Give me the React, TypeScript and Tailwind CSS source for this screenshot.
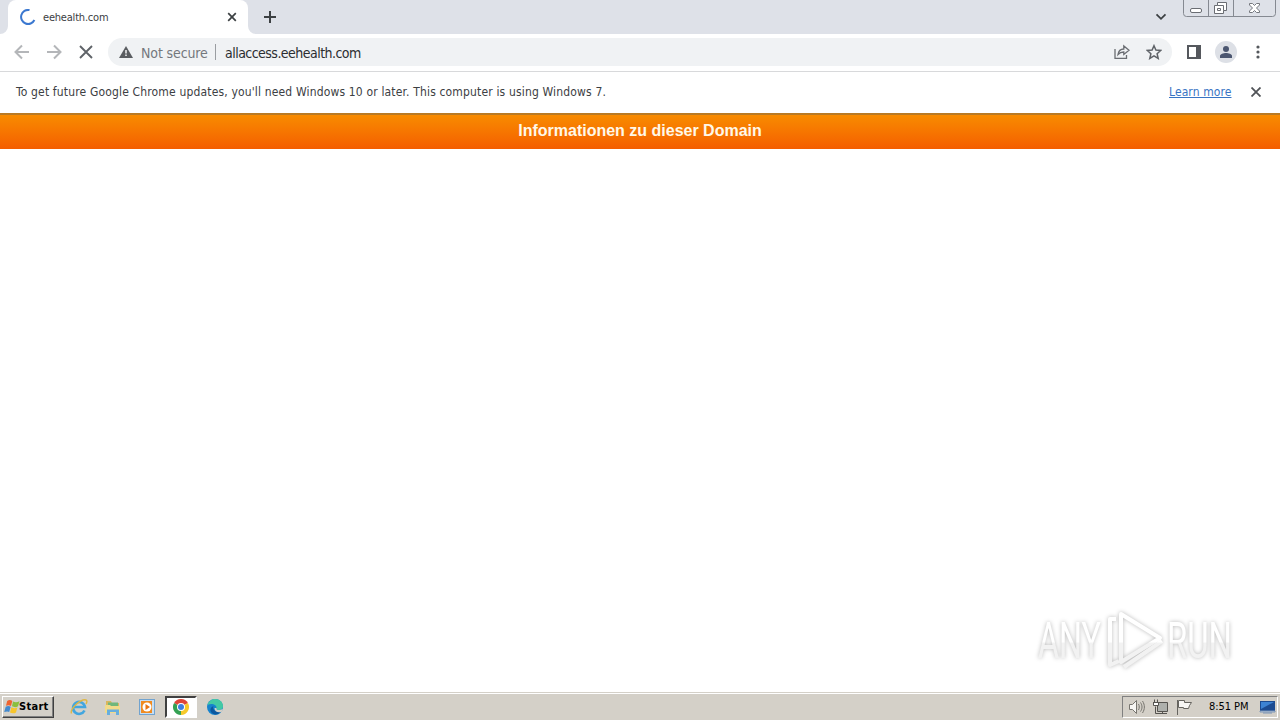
import type { ReactNode } from "react";

const UI_FONT = "font-['DejaVu_Sans_Condensed','DejaVu_Sans',sans-serif]";

function TabStrip() {
  return (
    <div className="flex h-[34px] bg-[#dee1e8]">
      <div className="relative ml-2 flex h-full w-60 items-center rounded-t-lg bg-white">
        <svg className="absolute -left-2 bottom-0" width="8" height="8">
          <path d="M8 0v8H0a8 8 0 0 0 8-8z" fill="#fff" />
        </svg>
        <svg className="absolute -right-2 bottom-0" width="8" height="8">
          <path d="M0 0v8h8a8 8 0 0 1-8-8z" fill="#fff" />
        </svg>
        <svg className="ml-3 shrink-0" width="16" height="16" fill="none">
          <path d="M9.5 1.1A7 7 0 1 0 14.4 11" stroke="#3b78d0" strokeWidth="2" />
        </svg>
        <span className="mt-px ml-[7px] text-[11px] leading-4 tracking-[-0.2px] whitespace-nowrap text-[#3c4043]">
          eehealth.com
        </span>
        <svg className="absolute top-3 left-[219px]" width="10" height="10" stroke="#3c4043" strokeWidth="1.7">
          <path d="M1.2 1.2l7.6 7.6M8.8 1.2L1.2 8.8" />
        </svg>
      </div>
      <svg className="mt-[11px] ml-4" width="12" height="12" stroke="#3c4043" strokeWidth="2">
        <path d="M6 0v12M0 6h12" />
      </svg>
      <svg className="mt-[13px] ml-auto" width="12" height="8" fill="none" stroke="#3c4043" strokeWidth="1.8">
        <path d="M1.5 1.3L6 5.8l4.5-4.5" />
      </svg>
      <WindowControls />
    </div>
  );
}

function WindowControls() {
  return (
    <svg className="mr-1 ml-4" width="93" height="18" fill="none">
      <path d="M.5 0v13.5a3 3 0 0 0 3 3h86a3 3 0 0 0 3-3V0M25.5 0v16M50.5 0v16" stroke="#858991" />
      <rect x="7.5" y="8.5" width="11" height="4" rx="1.5" fill="#fff" stroke="#6a6d73" />
      <path d="M34.5 2.5h9v8h-3v3h-9v-8h3z" fill="#fff" stroke="#6a6d73" />
      <path d="M34.5 5.5h6v5M34.5 8.5h3v2h-3z" stroke="#6a6d73" />
      <path
        d="M66.5 3.5h3l2 2 2-2h3v1.5l-3 3 3 3v1.5h-3l-2-2-2 2h-3V11l3-3-3-3z"
        fill="#fff"
        stroke="#74777d"
      />
    </svg>
  );
}

function Toolbar() {
  return (
    <div className="flex h-[38px] items-center border-b border-[#d8d9db] bg-white pb-px">
      <svg className="ml-[14px]" width="16" height="16" fill="none" stroke="#b4b6b9" strokeWidth="2">
        <path d="M15 8H2M8 1.5L1.500 8 8 14.500" />
      </svg>
      <svg className="ml-4" width="16" height="16" fill="none" stroke="#b4b6b9" strokeWidth="2">
        <path d="M1 8h13M8 1.500L14.500 8 8 14.500" />
      </svg>
      <svg className="ml-4" width="16" height="16" stroke="#5f6368" strokeWidth="1.9">
        <path d="M2 2l12 12M14 2L2 14" />
      </svg>
      <div className="ml-[14px] flex h-7 w-[1064px] items-center rounded-full bg-[#f0f2f4]">
        <svg className="ml-[11px]" width="14" height="12">
          <path d="M7 0l7 12H0z" fill="#5a5d61" />
          <path d="M6.300 4h1.400v3.500H6.300zM6.300 8.600h1.400V10H6.300z" fill="#fff" />
        </svg>
        <span className="mt-px ml-2 w-[67px] text-[14px] leading-5 tracking-[-0.12px] whitespace-nowrap text-[#74787d]">
          Not secure
        </span>
        <div className="ml-[7px] h-4 w-px bg-[#9a9da1]" />
        <span className="mt-px ml-[9px] text-[14px] leading-5 tracking-[-0.53px] whitespace-nowrap text-[#2b2d30]">
          allaccess.eehealth.com
        </span>
        <svg className="ml-auto" width="16" height="16" fill="none" stroke="#6a6d72" strokeWidth="1.3">
          <path d="M1 5v9.300h11.500V11" />
          <path d="M4 10.500C4.500 7 6.500 5 9.800 5V2l5.200 4.300-5.200 4.200V8C7 8 5.300 9 4 10.500z" />
        </svg>
        <svg className="mr-[10px] ml-4" width="16" height="16" fill="none" stroke="#5f6368" strokeWidth="1.5">
          <path d="M8 1.700l1.900 4.400 4.800.4-3.600 3.200 1.100 4.700L8 11.900l-4.200 2.500 1.100-4.700-3.600-3.200 4.800-.4z" />
        </svg>
      </div>
      <svg className="ml-[15px]" width="14" height="14">
        <path d="M0 0h14v14H0zM2 2v10h7V2z" fill="#55585d" fillRule="evenodd" />
      </svg>
      <div className="ml-[14px] flex h-[22px] w-[22px] items-center justify-center rounded-full bg-[#dde0e6]">
        <svg width="12" height="12" fill="#4b5670">
          <circle cx="6" cy="3" r="3" />
          <path d="M0 12v-2c0-2 3.500-3 6-3s6 1 6 3v2z" />
        </svg>
      </div>
      <svg className="ml-[19px]" width="4" height="14" fill="#55585d">
        <circle cx="2" cy="2" r="1.600" />
        <circle cx="2" cy="7" r="1.600" />
        <circle cx="2" cy="12" r="1.600" />
      </svg>
    </div>
  );
}

function InfoBar() {
  return (
    <div className="flex h-[41px] items-center bg-white pr-[19px] pb-[2px] pl-4 text-[12px] leading-4">
      <span className="tracking-[0.16px] whitespace-nowrap text-[#3c4043]">
        To get future Google Chrome updates, you'll need Windows 10 or later. This computer is using Windows 7.
      </span>
      <span className="ml-auto w-[63px] tracking-[0.1px] whitespace-nowrap text-[#3874c4] underline">Learn more</span>
      <svg className="ml-[19px]" width="10" height="10" stroke="#505357" strokeWidth="1.8">
        <path d="M.5.5l9 9M9.500.5l-9 9" />
      </svg>
    </div>
  );
}

function Watermark() {
  return (
    <svg
      className="absolute right-[40px] bottom-2 overflow-visible drop-shadow-[0_0_2px_rgba(0,0,0,0.28)]"
      width="210"
      height="76"
      fill="none"
    >
      <defs>
        <linearGradient id="fade" gradientUnits="userSpaceOnUse" x1="0" y1="6" x2="0" y2="62">
          <stop offset="0.5" stopColor="#fff" />
          <stop offset="0.52" stopColor="#f2f2f2" />
        </linearGradient>
      </defs>
      <g fill="url(#fade)" fontFamily="Roboto, sans-serif" fontSize="50" fontWeight="400">
        <text x="8" y="50" textLength="63" lengthAdjust="spacingAndGlyphs">ANY</text>
        <text x="137" y="50" textLength="65" lengthAdjust="spacingAndGlyphs">RUN</text>
      </g>
      <g stroke="url(#fade)" strokeLinejoin="round" strokeWidth="4">
        <path d="M91 6l39 24-39 24z" />
        <path d="M86 11h-6v46l9-4" />
        <path d="M132 33L94 59" />
      </g>
    </svg>
  );
}

function PageContent() {
  return (
    <main className="relative flex-1 bg-white">
      <div className="flex h-9 items-center justify-center border-t-2 border-[#b97a25] bg-linear-to-b from-[#f88b00] to-[#f45d00] pb-[2px]">
        <h1 className="font-['Liberation_Sans',Arial,sans-serif] text-[16px] leading-5 font-bold text-[#fff8e8]">
          Informationen zu dieser Domain
        </h1>
      </div>
      <Watermark />
    </main>
  );
}

function TaskIcon({ children, active }: { children: ReactNode; active?: boolean }) {
  return (
    <div
      className={
        active
          ? "flex h-[22px] w-8 items-center justify-center border-2 border-t-[#404040] border-r-white border-b-white border-l-[#404040] bg-white"
          : "flex h-[22px] w-8 items-center justify-center"
      }
    >
      {children}
    </div>
  );
}

function Taskbar() {
  return (
    <footer className="flex h-7 items-center border-t border-[#d4d0c8] bg-[#d4d0c8] shadow-[inset_0_1px_0_#fff]">
      <button className="ml-[2px] flex h-[22px] w-[52px] items-center border border-t-white border-r-[#404040] border-b-[#404040] border-l-white shadow-[inset_-1px_-1px_0_#808080]">
        <svg className="ml-px shrink-0" width="17" height="16">
          <path d="M3.200 2C5 .5 7 1 8.300 2L7 7C5.500 6 3.600 6 2 6.800z" fill="#ee6330" />
          <path d="M9 2.500c2 1 4 1 6.500-.2L14 7.300c-2 1.200-4 1-6 0z" fill="#8abf3d" />
          <path d="M1.700 7.800c2-1 3.500-.8 5 0L5.200 13C4 12.200 2.300 12.200.2 13.100z" fill="#4289ce" />
          <path d="M7.400 8.300c2 1 4 1.200 6 0L12 13.400c-2 1.200-4 1-6 0z" fill="#f7c52c" />
        </svg>
        <span className="-ml-[2px] mt-px text-[11px] leading-4 font-bold tracking-[0.3px] text-black">Start</span>
      </button>
      <div className="ml-[9px] flex items-center gap-[2px]">
        <TaskIcon>
          <svg width="18" height="18" fill="none">
            <path d="M14.500 12.500A6 6 0 1 1 15 9H4" stroke="#42a6df" strokeWidth="2.6" />
            <path d="M1.500 15.500C-.5 11 11 .5 16 2c1.500.6.8 2.500 0 4" stroke="#dfb744" strokeWidth="1.4" />
          </svg>
        </TaskIcon>
        <TaskIcon>
          <svg width="16" height="16">
            <path d="M1 2h5l1 2h7v10H1z" fill="#d9b65c" />
            <path d="M3 3.500h10v4H3z" fill="#6fb77b" />
            <path d="M0 6h5l1 1h9v7H0z" fill="#f2db8a" />
            <path d="M2 16v-5.500h12V16h-3v-3H5v3z" fill="#67aede" />
          </svg>
        </TaskIcon>
        <TaskIcon>
          <svg width="16" height="16">
            <rect x=".5" y=".5" width="15" height="15" fill="#c6def4" stroke="#71a3cf" />
            <rect x="2" y="2" width="11" height="12" fill="#f08b20" />
            <circle cx="8" cy="8" r="4.500" fill="#fff" />
            <path d="M6.500 5l4.500 3-4.500 3z" fill="#e87412" />
          </svg>
        </TaskIcon>
        <TaskIcon active>
          <svg width="16" height="16" viewBox="0 0 16 16">
            <path d="M8 8L1.070 4A8 8 0 0 1 14.930 4z" fill="#df4638" />
            <path d="M8 8l6.930-4A8 8 0 0 1 8 16z" fill="#f6c929" />
            <path d="M8 8v8A8 8 0 0 1 1.070 4z" fill="#34a153" />
            <circle cx="8" cy="8" r="4" fill="#fff" />
            <circle cx="8" cy="8" r="3" fill="#3d7fe0" />
          </svg>
        </TaskIcon>
        <TaskIcon>
          <svg width="16" height="16">
            <circle cx="8" cy="8" r="8" fill="#1683cd" />
            <path d="M.5 6C2 1 6 0 8 0c5 0 8 3.500 8 7 0 3-2.500 4-4.500 4-2 0-2.500-1-2-2C10 6 5 3.500.5 6z" fill="#43c9a4" />
            <path d="M6.500 7C5 10 8 14 14 12.500c-3 4-8 3.500-10 .5-1.500-2.500 0-5 2.500-6z" fill="#0b579f" />
            <path d="M9.500 9c-.6 1.500 1 2.200 3 2l3.500-1-1.500 3c-4 1-7-.5-7-4z" fill="#d4d0c8" />
          </svg>
        </TaskIcon>
      </div>
      <div className="mr-[2px] ml-auto flex h-[22px] w-[156px] items-center border border-t-[#808080] border-r-white border-b-white border-l-[#808080]">
        <svg className="ml-[5px]" width="18" height="16" fill="none" stroke="#77756f">
          <path d="M1.500 5.500h3l4-4v13l-4-4h-3z" fill="#f7f6f3" />
          <path d="M10.500 5c1 2 1 4 0 6M12.500 3.500c2 3 2 6 0 9M14.500 2c2.500 4 2.500 8 0 12" />
        </svg>
        <svg className="ml-[6px]" width="17" height="16" fill="none" stroke="#55534f">
          <path d="M5.500 3.500h10v9h-10z" fill="#aeb0ac" />
          <path d="M6 14.500h9M10.500 12v2M3.500 7.500v7h4" />
          <path d="M1.500 3v3.500h5V3M2.500 3V.5M5.500 3V.5M1 3.500h6" fill="#fff" />
        </svg>
        <svg className="ml-[7px]" width="17" height="16" fill="#f7f6f3" stroke="#66645f">
          <path d="M1.500 1v15" />
          <path d="M2.500 1.500h6v2h7l-2 3-1 3h-5v-1h-5z" />
        </svg>
        <span className="mt-px ml-4 w-[41px] text-[11px] leading-4 tracking-[-0.05px] whitespace-nowrap text-black">8:51 PM</span>
        <svg className="ml-[9px]" width="17" height="14">
          <path d="M1 1h15v10H1z" fill="#1c4b91" />
          <path d="M2 2h13L2 9z" fill="#3d83d3" />
          <path d="M1 11h15v1H1zM4 13h9" fill="#edf3fa" stroke="#7a94b5" />
        </svg>
      </div>
    </footer>
  );
}

export default function App() {
  return (
    <div className={`flex h-[720px] w-[1280px] flex-col overflow-hidden bg-white ${UI_FONT}`}>
      <TabStrip />
      <Toolbar />
      <InfoBar />
      <PageContent />
      <Taskbar />
    </div>
  );
}
